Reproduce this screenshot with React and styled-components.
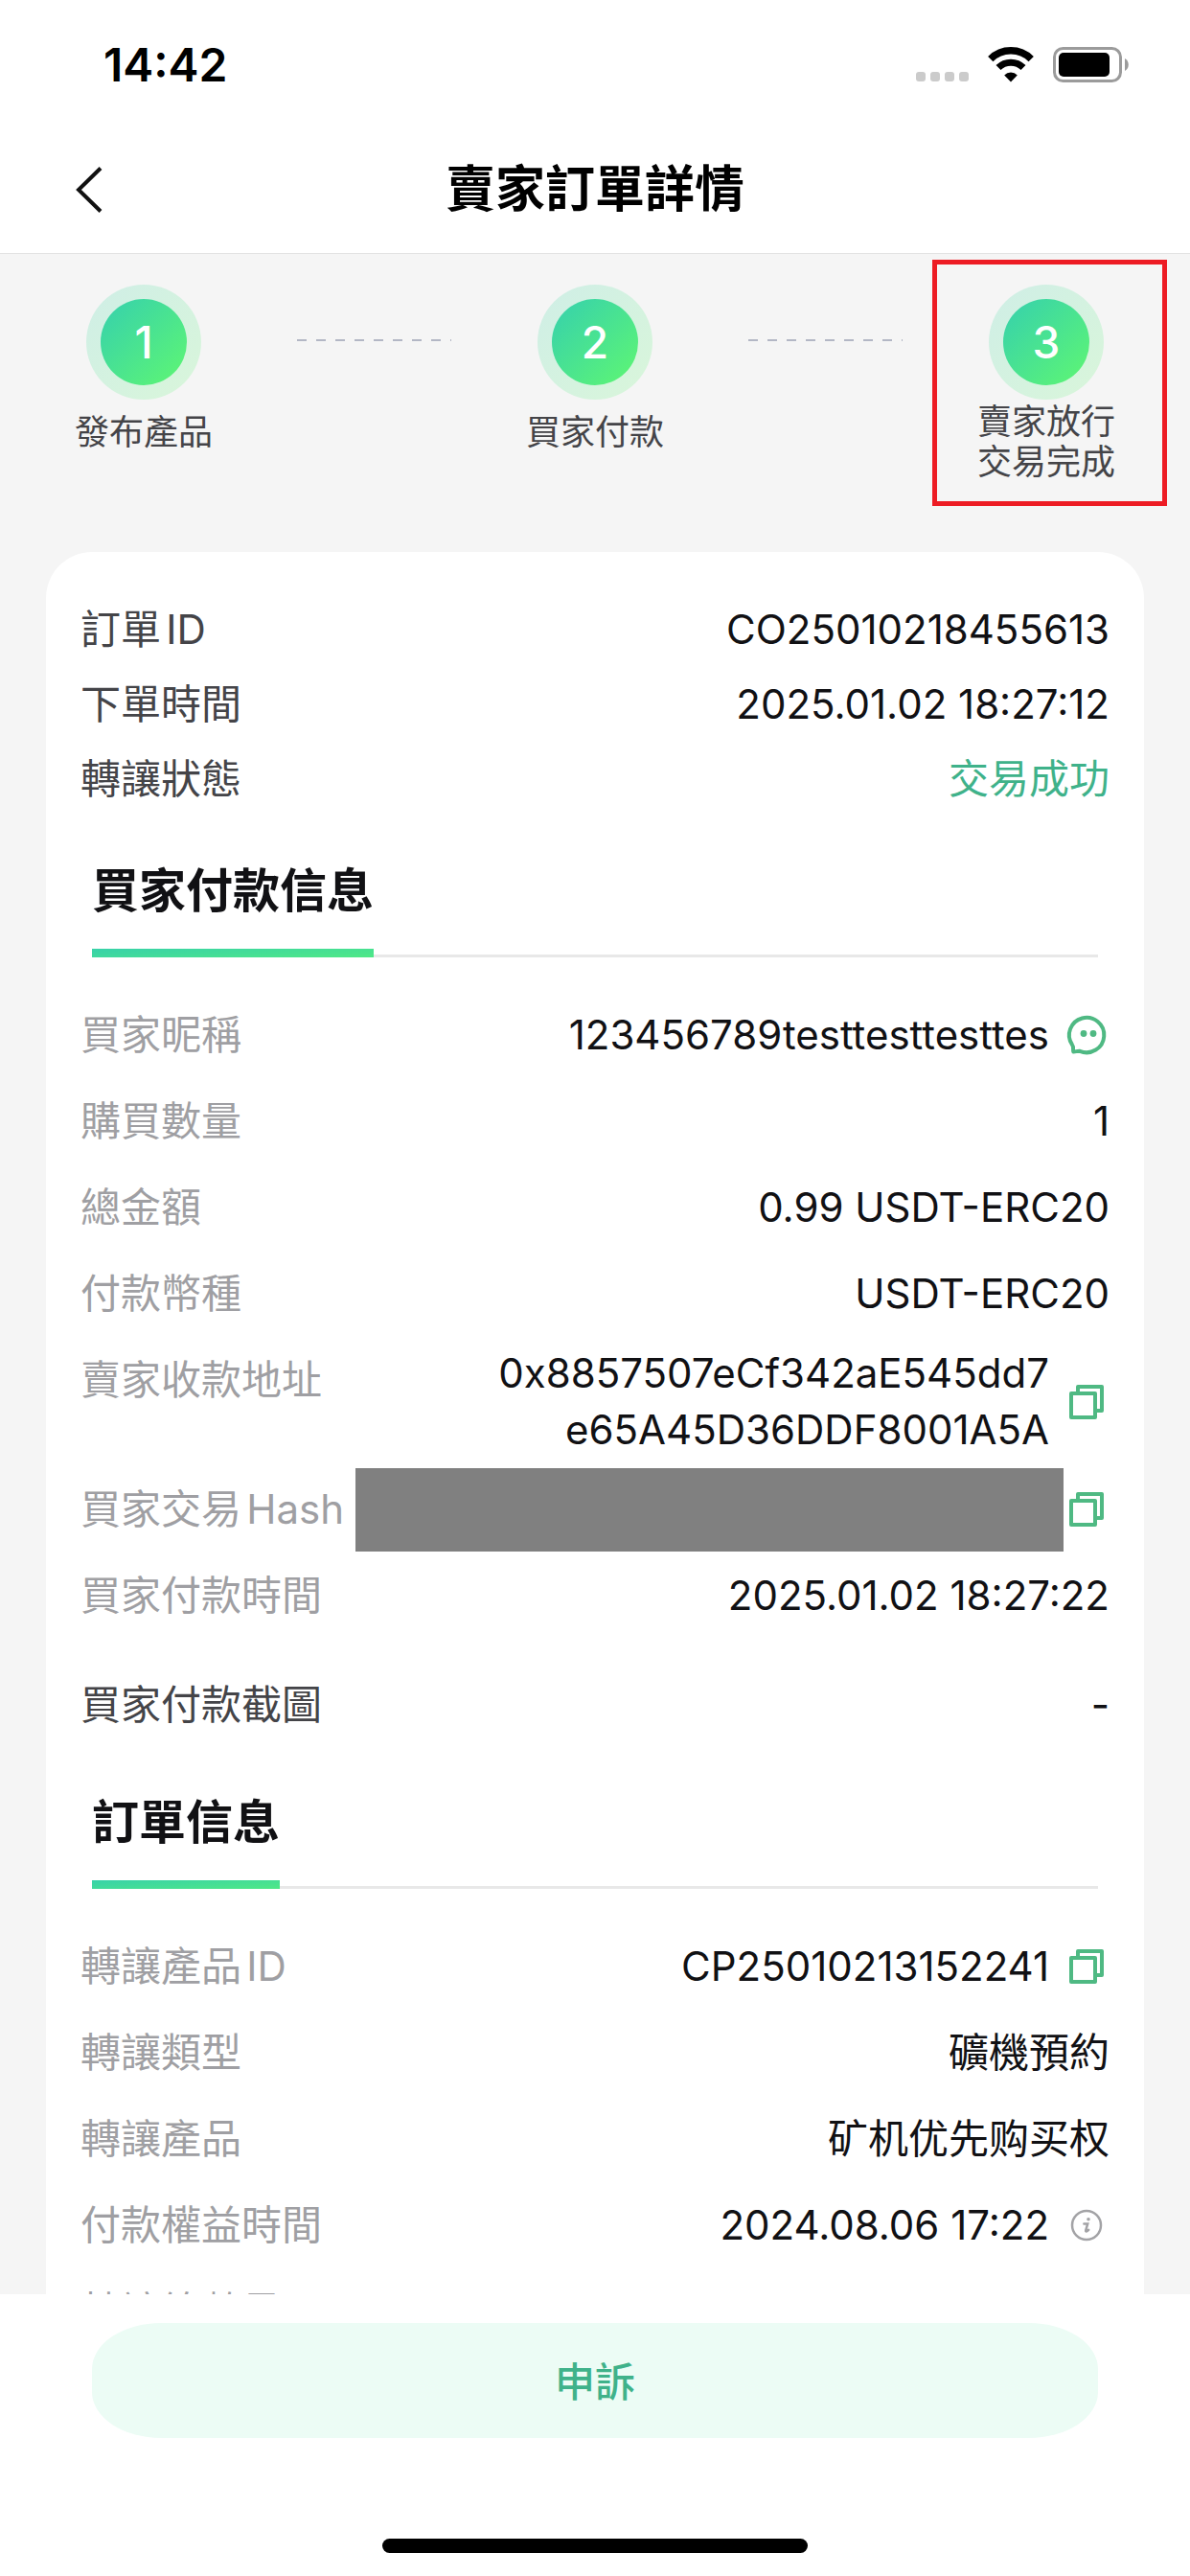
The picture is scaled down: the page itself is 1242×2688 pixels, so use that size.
import React from 'react';
import styled, { createGlobalStyle } from 'styled-components';

const steps = [
  { number: 1, lines: ['發布產品'] },
  { number: 2, lines: ['買家付款'] },
  { number: 3, lines: ['賣家放行', '交易完成'], marked: true },
];

const summary = [
  { label: '訂單ID', value: 'CO25010218455613' },
  { label: '下單時間', value: '2025.01.02 18:27:12' },
  { label: '轉讓狀態', value: '交易成功', success: true },
];

const payment = [
  { label: '買家昵稱', value: '123456789testtesttesttes', icon: 'chat' },
  { label: '購買數量', value: '1' },
  { label: '總金額', value: '0.99 USDT-ERC20' },
  { label: '付款幣種', value: 'USDT-ERC20' },
  {
    label: '賣家收款地址',
    value: '0x8857507eCf342aE545dd7e65A45D36DDF8001A5A',
    icon: 'copy',
  },
  { label: '買家交易Hash', hidden: true, icon: 'copy' },
  { label: '買家付款時間', value: '2025.01.02 18:27:22' },
];

const order = [
  { label: '轉讓產品ID', value: 'CP25010213152241', icon: 'copy' },
  { label: '轉讓類型', value: '礦機預約' },
  { label: '轉讓產品', value: '矿机优先购买权' },
  { label: '付款權益時間', value: '2024.08.06 17:22', icon: 'info' },
  { label: '轉讓總數量' },
];

export default function App() {
  return (
    <PageStyles>
      <GlobalStyles />
      <StatusBar />
      <NavBar>
        <BackButton type='button' aria-label='返回'>
          <svg width='30' height='50' viewBox='0 0 30 50' fill='none'>
            <path d='M27 2.5 4 25 27 47.5' stroke='#111' strokeWidth='4' />
          </svg>
        </BackButton>
        <h1>賣家訂單詳情</h1>
      </NavBar>
      <Content>
        <Steps>
          {steps.map((step, i) => (
            <React.Fragment key={step.number}>
              {i > 0 && <Dashes aria-hidden='true' />}
              <Step {...step} />
            </React.Fragment>
          ))}
        </Steps>
        <Card>
          <List>
            {summary.map((row) => (
              <SummaryRow key={row.label}>
                <Label>{row.label}</Label>
                <Value $success={row.success}>{row.value}</Value>
              </SummaryRow>
            ))}
          </List>
          <SectionTitle>
            <span>買家付款信息</span>
          </SectionTitle>
          <DetailList rows={payment} />
          <Screenshot>
            <Row>
              <Label>買家付款截圖</Label>
              <Value>-</Value>
            </Row>
          </Screenshot>
          <SectionTitle>
            <span>訂單信息</span>
          </SectionTitle>
          <DetailList rows={order} />
        </Card>
      </Content>
      <Footer>
        <AppealButton type='button'>申訴</AppealButton>
        <HomeIndicator />
      </Footer>
    </PageStyles>
  );
}

function StatusBar() {
  return (
    <StatusBarStyles>
      <time>14:42</time>
      <div className='icons'>
        <svg width='55' height='11' viewBox='0 0 55 11' fill='#cbcbcb'>
          <rect x='0' width='10' height='10' rx='3' />
          <rect x='15' width='10' height='10' rx='3' />
          <rect x='30' width='10' height='10' rx='3' />
          <rect x='45' width='10' height='10' rx='3' />
        </svg>
        <svg width='48' height='37' viewBox='0 0 48 37' fill='none'>
          <path d='M2.8 12.6a30 30 0 0 1 42.4 0' stroke='#000' strokeWidth='7.5' />
          <path d='M11 21.6a18.4 18.4 0 0 1 26 0' stroke='#000' strokeWidth='7' />
          <path d='M24 36.4 17.2 29.4a9.7 9.7 0 0 1 13.6 0Z' fill='#000' />
        </svg>
        <svg width='79' height='37' viewBox='0 0 79 37'>
          <rect x='1.5' y='1.5' width='69' height='34' rx='9' fill='none' stroke='#9b9b9b' strokeWidth='3' />
          <rect x='6' y='6' width='53' height='25' rx='5' />
          <path d='M75 12a7.5 7.5 0 0 1 0 13Z' fill='#9b9b9b' />
        </svg>
      </div>
    </StatusBarStyles>
  );
}

function Step({ number, lines, marked }) {
  return (
    <StepStyles $wrapped={lines.length > 1}>
      <div className='ring'>
        <div className='circle'>{number}</div>
      </div>
      <p>
        {lines.map((line) => (
          <span key={line}>{line}</span>
        ))}
      </p>
      {marked && <Marker />}
    </StepStyles>
  );
}

function DetailList({ rows }) {
  return (
    <List>
      {rows.map(({ label, value, hidden, icon }) => (
        <Row key={label}>
          <Label $muted>{label}</Label>
          {hidden && <Redacted aria-label='已隱藏' />}
          {value && <Value $icon={icon}>{value}</Value>}
          {icon && <RowIcon name={icon} />}
        </Row>
      ))}
    </List>
  );
}

function RowIcon({ name }) {
  const { title, drawing } = icons[name];
  return (
    <IconButton type='button' aria-label={title}>
      <svg width='48' height='48' viewBox='0 0 48 48' fill='none'>
        {drawing}
      </svg>
    </IconButton>
  );
}

const icons = {
  chat: {
    title: '聯絡買家',
    drawing: (
      <>
        <path
          d='M9 34.2A18.2 18.2 0 1 1 17 40.8C14.6 40.4 12.6 41.8 10.4 41.6C9.4 39.4 11 37 9 34.2Z'
          stroke='#4fb983'
          strokeWidth='4'
          strokeLinejoin='round'
        />
        <circle cx='21' cy='22.5' r='3.4' fill='#4fb983' />
        <circle cx='31' cy='22.5' r='3.4' fill='#4fb983' />
      </>
    ),
  },
  copy: {
    title: '複製',
    drawing: (
      <path
        d='M8 15h25v25H8zM15 15V8h25v25h-7'
        stroke='#4fb983'
        strokeWidth='4'
        strokeLinejoin='round'
      />
    ),
  },
  info: {
    title: '說明',
    drawing: (
      <>
        <circle cx='24' cy='24' r='15' stroke='#a3a3a6' strokeWidth='2.5' />
        <circle cx='26' cy='17.8' r='1.8' fill='#a3a3a6' />
        <path
          d='M21.4 22.6h3.8l-2 6.8c-.2 1 .6 1.2 1.4.8l1.6-1.4'
          stroke='#a3a3a6'
          strokeWidth='2.5'
          strokeLinecap='round'
        />
      </>
    ),
  },
};

const GlobalStyles = createGlobalStyle`
  * {
    box-sizing: border-box;
  }

  body {
    margin: 0;
    background-color: #fff;
    color: #111114;
    font-family: Inter, 'Noto Sans CJK TC', sans-serif;
    font-size: 42px;
    text-autospace: normal;
  }

  h1, h2, p, dl, dd {
    margin: 0;
  }

  button {
    border: 0;
    padding: 0;
    background: none;
    color: inherit;
    font-family: inherit;
    cursor: pointer;
  }

  svg {
    display: block;
  }
`;

const PageStyles = styled.div`
  display: flex;
  flex-direction: column;
  height: 100vh;
`;

const StatusBarStyles = styled.div`
  display: flex;
  flex: none;
  align-items: center;
  justify-content: space-between;
  height: 132px;
  padding: 3px 64px 0 108px;
  color: #000;

  time {
    font-size: 48px;
    font-weight: 600;
  }

  .icons {
    display: flex;
    align-items: flex-end;
    gap: 20px;
  }
`;

const NavBar = styled.header`
  display: grid;
  flex: none;
  grid-template-columns: 1fr auto 1fr;
  align-items: center;
  height: 133px;
  padding: 0 78px;
  border-bottom: 1px solid #e3e3e3;

  h1 {
    color: #000;
    font-size: 52px;
    font-weight: 600;
    line-height: 72px;
  }
`;

const BackButton = styled.button`
  justify-self: start;
`;

const Content = styled.main`
  flex: 1;
  min-height: 0;
  overflow-y: auto;
  padding: 0 48px;
  background-color: #f5f5f5;
  scrollbar-width: none;
`;

const Steps = styled.div`
  display: flex;
  margin: 0 -48px;
  min-height: 311px;
`;

const Dashes = styled.div`
  flex: 1;
  height: 2px;
  margin-top: 89px;
  background: repeating-linear-gradient(to right, transparent 0 10px, #b3b7c5 10px 20px);
`;

const StepStyles = styled.div`
  position: relative;
  display: flex;
  flex: 0 0 300px;
  flex-direction: column;
  align-items: center;
  padding-top: 32px;

  .ring {
    padding: 15px;
    border-radius: 50%;
    background: linear-gradient(135deg, #cfeee6, #d9f6da);
  }

  .circle {
    display: flex;
    align-items: center;
    justify-content: center;
    width: 90px;
    height: 90px;
    border-radius: 50%;
    background: linear-gradient(135deg, #35d0ae, #5ff772);
    color: #fff;
    font-size: 46px;
    font-weight: 500;
  }

  p {
    margin-top: 2px;
    color: #444448;
    font-size: 36px;
    line-height: ${({ $wrapped }) => ($wrapped ? '42px' : '64px')};
  }

  span {
    display: block;
  }
`;

const Marker = styled.div`
  position: absolute;
  top: 6px;
  right: 24px;
  left: 31px;
  height: 257px;
  border: 5px solid #ed1c24;
`;

const Card = styled.section`
  padding: 42px 36px;
  border-radius: 48px;
  background-color: #fff;
`;

const List = styled.dl``;

const Row = styled.div`
  display: flex;
  align-items: center;
  min-height: 90px;
`;

const SummaryRow = styled(Row)`
  min-height: 78px;
`;

const Label = styled.dt`
  flex: 0 0 287px;
  align-self: flex-start;
  color: ${({ $muted }) => ($muted ? '#9f9fa3' : '#444448')};
  line-height: 90px;
  white-space: nowrap;

  ${SummaryRow} & {
    line-height: 78px;
  }
`;

const Value = styled.dd`
  flex: 1;
  min-width: 0;
  padding: 8px ${({ $icon }) => ($icon ? '15px' : '0')} 9px 136px;
  color: ${({ $success }) => ($success ? '#3fb28a' : 'inherit')};
  line-height: 59px;
  text-align: right;
  overflow-wrap: anywhere;
`;

const Redacted = styled.dd`
  flex: 1;
  height: 87px;
  background-color: #808080;
`;

const IconButton = styled.button`
  flex: none;
`;

const SectionTitle = styled.h2`
  display: flex;
  margin: 42px 12px 36px;
  background: linear-gradient(#e8e8e8, #e8e8e8) bottom / 100% 3px no-repeat;
  font-size: 49px;
  font-weight: 600;
  line-height: 72px;

  span {
    padding-bottom: 33px;
    background: linear-gradient(176deg, #38d2a9, #4fe886) bottom / 100% 9px no-repeat;
  }
`;

const Screenshot = styled.dl`
  && {
    margin-top: 24px;
  }
`;

const Footer = styled.footer`
  display: flex;
  flex: none;
  flex-direction: column;
  align-items: center;
  padding: 30px 96px 24px;
  background-color: #fff;
`;

const AppealButton = styled.button`
  width: 100%;
  height: 120px;
  margin-bottom: 105px;
  border-radius: 72px / 48px;

  && {
    padding-bottom: 4px;
    background-color: #ecfcf5;
    color: #3fb28a;
    font-size: 42px;
    font-weight: 500;
  }
`;

const HomeIndicator = styled.div`
  width: 444px;
  height: 15px;
  border-radius: 8px;
  background-color: #000;
`;
